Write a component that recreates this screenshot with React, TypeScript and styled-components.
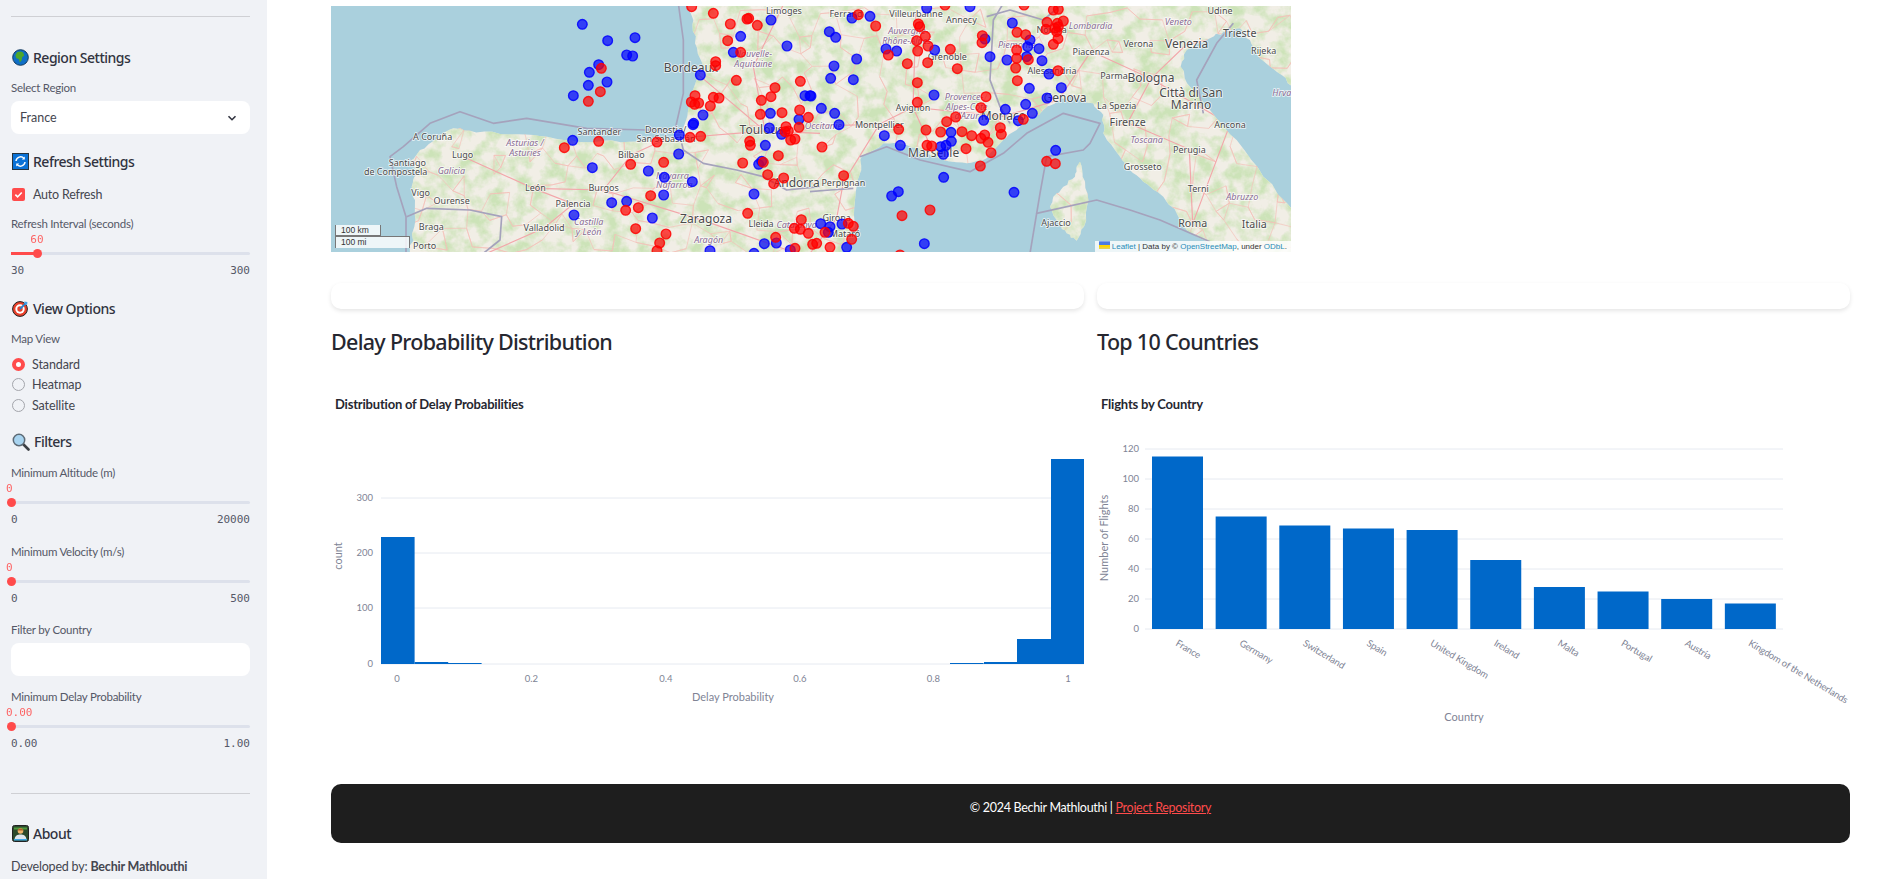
import * as React from 'react'
import styled, { createGlobalStyle } from 'styled-components'

const SANS = `Lato, "Noto Sans", sans-serif`
const HEAD = `"Noto Sans", Lato, sans-serif`
const MONO = `"DejaVu Sans Mono", "Liberation Mono", monospace`
const RED = '#ff4b4b'
const BAR = '#0068c9'
// the map is drawn 3x: the viewBox is 2880 wide, shown at 960px
const EAST = 1470

type Pt = [number, number]

const pairs = (flat: number[], dx = 0): Pt[] => {
    const out: Pt[] = []
    for (let i = 0; i < flat.length; i += 2) out.push([flat[i] + dx, flat[i + 1]])
    return out
}

const line = (flat: number[], dx = 0) => pairs(flat, dx).map(p => p.join(',')).join(' ')

let seed = 17
const rand = () => {
    seed = (seed * 16807) % 2147483647
    return seed / 2147483647
}

// breaks a straight coast segment into a few jagged pieces
const rough = (pts: Pt[], amount = 9) => {
    const out: Pt[] = []
    pts.forEach((p, i) => {
        out.push(p)
        const next = pts[i + 1]
        if (!next) return
        for (let k = 1; k < 4; k++) {
            out.push([
                p[0] + ((next[0] - p[0]) * k) / 4 + (rand() - 0.5) * amount,
                p[1] + ((next[1] - p[1]) * k) / 4 + (rand() - 0.5) * amount,
            ])
        }
    })
    return out.map(p => `${p[0].toFixed(1)},${p[1].toFixed(1)}`).join(' ')
}

const blueMarkers: Pt[] = [
    ...pairs([787,73,863,122,945,113,920,165,938,168,836,194,808,217,861,246,805,256,760,287,1141,225,1149,345,1121,370,1119,374,1078,405,758,421,1076,462,817,503,985,513,1033,532,1117,545,1031,585,920,604,875,608,997,654,762,645,1302,582,1170,752,1333,731,1369,729,1302,760,1411,750,1353,60,1262,109,1401,138,1240,157,1455,287,1470,287,1351,340,1437,358,1348,384,1385,403,1336,436,1325,484,1316,493]),
    ...pairs([350,24,480,20,126,54,180,49,58,95,77,112,228,147,260,153,374,150,140,177,72,198,62,235,130,239,372,285,3,288,34,325,74,340,87,374,223,407,271,436,525,117,540,170,591,180,607,69,660,120,653,140,687,146,650,170,696,182,717,222,658,265,754,263,711,294,647,313,586,328,667,340,521,361,625,362,423,397,424,424,408,436,392,440,400,463,401,532,737,451,612,577,265,575,245,588,343,731,32,671,60,680,96,672,55,697,110,742], EAST),
]

const redMarkers: Pt[] = [
    ...pairs([1115,20,1180,40,1231,72,1281,57,1286,55,1312,76,1223,122,1262,157,1187,185,1187,197,1249,241,1441,244,1365,263,1353,290,1324,301,844,205,841,275,805,304,1125,287,1114,306,1124,313,1136,309,1180,292,1197,294,1171,318,1439,330,1386,338,1321,343,1465,352,1110,412,1142,409,733,443,836,424,1011,426,1289,424,1291,436,1398,380,1395,395,1405,393,1437,382,1412,420,1425,417,1375,467,1268,489,1330,487,932,493,1031,487,1343,524,1391,534,1361,551,992,587,955,623,917,631,947,686,1283,640,1038,702,1019,729,1011,752,1444,659,1423,685,1441,688,1465,700,1367,712,1425,745]),
    ...pairs([405,15,642,15,145,44,197,78,325,72,329,80,346,109,320,122,354,138,323,153,235,165,292,191,353,188,421,148,442,206,517,107,516,128,621,97,647,104,620,150,620,175,655,179,617,204,622,242,744,212,322,248,322,307,528,290,513,323,437,351,410,365,348,390,392,396,456,395,485,407,524,405,513,415,534,427,543,458,468,446,351,436,365,438,574,403,571,383,640,358,511,498,710,484,736,491,266,388,36,441,101,527,360,630,276,647,730,30,745,28,711,67,760,63,742,70,735,85,745,80,708,88,740,95,744,116,730,133,130,679,115,670,45,697,125,718,20,730,8,733,60,742,270,765], EAST),
]

type Label = [string, number, number, 's' | 'm' | 'l' | 'r']

const westLabels: Label[] = [
    ['Limoges',1392,32,'s'],['Bordeaux',1113,205,'l'],['Toulouse',1335,393,'l'],['Nouvelle-',1300,162,'r'],['Aquitaine',1300,191,'r'],
    ['Santander',838,396,'s'],['Donostia/',1037,388,'s'],['San Sebastián',1038,417,'s'],['A Coruña',338,410,'s'],['Lugo',428,464,'s'],
    ['Santiago',262,488,'s'],['de Compostela',227,516,'s'],['Galicia',394,513,'r'],['Asturias /',615,429,'r'],['Asturies',615,457,'r'],
    ['Bilbao',934,464,'s'],['Navarra',1057,527,'r'],['Nafarroa',1063,555,'r'],['Vigo',302,579,'s'],['Ourense',395,601,'s'],['León',646,563,'s'],
    ['Burgos',851,563,'s'],['Palencia',759,612,'s'],['Zaragoza',1158,660,'l'],['Lleida',1323,670,'s'],['Andorra',1430,552,'l'],['Catalunya',1430,675,'r'],
    ['Braga',334,680,'s'],['Valladolid',672,684,'s'],['Castilla',806,666,'r'],['y León',806,694,'r'],['Aragón',1166,720,'r'],['Porto',314,738,'s'],
]

const eastLabels: Label[] = [
    ['Ferrand',108,40,'s'],['Villeurbanne',318,41,'s'],['Annecy',454,60,'s'],['Auvergne-',295,92,'r'],['Rhône-Alpes',290,121,'r'],['Grenoble',412,170,'s'],
    ['Alessandria',726,212,'s'],['Piemonte',620,135,'r'],['Novara',725,90,'s'],['Lombardia',842,76,'r'],['Piacenza',843,154,'s'],['Verona',985,130,'s'],
    ['Venezia',1130,133,'l'],['Veneto',1105,64,'r'],['Udine',1230,33,'s'],['Trieste',1289,100,'m'],['Rijeka',1361,153,'s'],['Hrvatska',1440,277,'r'],
    ['Parma',912,228,'s'],['Bologna',1023,236,'l'],['Città di San',1143,281,'l'],['Marino',1143,318,'l'],['Genova',765,295,'l'],['La Spezia',920,318,'s'],
    ['Firenze',953,368,'m'],['Ancona',1260,373,'s'],['Toscana',1010,420,'r'],['Perugia',1138,448,'s'],['Grosseto',998,501,'s'],['Terni',1165,566,'s'],
    ['Abruzzo',1297,590,'r'],['Roma',1148,671,'m'],['Italia',1333,675,'m'],['Ajaccio',738,667,'s'],['Avignon',309,322,'s'],['Provence-',462,291,'r'],
    ['Alpes-Côte',470,320,'r'],["d'Azur",470,348,'r'],['Monaco',580,349,'l'],['Montpellier',208,373,'s'],['Marseille',371,460,'l'],['Perpignan',100,548,'s'],
    ['Occitanie',40,378,'r'],['Girona',80,654,'s'],['Mataró',105,700,'s'],
]

// Atlantic side, along the top and right edge, then back along the Mediterranean
const mainland = [
    `M${rough(pairs([270,760,283,680,285,600,275,560,290,520,275,480,300,450,345,420,400,385,450,392,540,402,640,405,730,420,830,425,930,425,1010,415,1085,412,1095,370,1110,300,1135,230,1150,200,1125,130,1120,60,1100,10]))}`,
    `L2920,10 L2920,760 L${1245 + EAST},760 L`,
    rough(pairs([1200,735,1130,690,1100,640,1060,590,1000,545,960,510,930,470,880,400,880,345,850,310,790,290,745,300,700,330,640,370,620,390,580,420,530,475,470,490,400,480,340,460,290,435,220,430,155,470,150,520,135,600,135,680,100,735,90,760], EAST)),
    'Z',
].join(' ')

const adriatic = `M${rough(pairs([1450,632,1360,530,1280,420,1200,330,1140,260,1112,200,1130,150,1200,115,1240,95,1290,85,1320,120,1350,175,1400,215,1450,262], EAST))} Z`
const corsica = `M${rough(pairs([810,485,818,530,835,600,822,680,800,722,770,700,745,670,720,620,730,590,760,560,795,530,800,500], EAST), 7)} Z`
const landPath = `${mainland} ${adriatic} ${corsica}`

const borders = [
    line([1085,430,1090,450,1150,490,1250,510,1330,530,1400,570,1500,560]),
    line([0,575,60,570,130,565], EAST),
    line([260,650,320,625,450,630,545,650,540,720,490,760]),
    line([580,10,550,60,540,240,570,320,600,370], EAST),
    line([530,50,600,30,700,60,760,10], EAST),
    line([1075,10,1090,120,1090,280,1065,390,980,390,800,385,620,355,520,370,420,335,330,370,250,440,210,470,230,560,258,650,258,760]),
    line([150,470,230,440,330,480,480,515,580,460,650,400,760,340,870,370,840,430,820,450,710,470,690,580,680,640,860,600,960,630,1050,660,1200,725], EAST),
    line([1180,340,1160,240,1220,130,1270,70], EAST),
    line([680,640,660,760], EAST),
]

// minor road net: a jittered grid, each point joined to its nearest neighbours
const buildRoads = () => {
    const points: Pt[] = []
    for (let x = 40; x < 2920; x += 62) {
        for (let y = 20; y < 760; y += 58) points.push([x + rand() * 50, y + rand() * 46])
    }
    const segs: [Pt, Pt][] = []
    points.forEach(p => {
        const near = points
            .filter(q => q !== p)
            .map(q => ({ q, d: (q[0] - p[0]) ** 2 + (q[1] - p[1]) ** 2 }))
            .sort((a, b) => a.d - b.d)
            .slice(0, 2)
        near.forEach(n => segs.push([p, n.q]))
    })
    return segs
}

const roads = buildRoads()

const mainRoads = [
    line([430,470,640,565,850,570,1160,665,1430,760]),
    line([1113,205,1335,393,1500,400]),
    line([1392,10,1300,200,1335,393]),
    line([640,565,760,612,672,684,500,760]),
    line([850,570,934,464,1038,417,1335,393]),
    line([208,373,309,322,371,460], EAST),
    line([0,378,208,373,100,548,80,654,0,760], EAST),
    line([318,41,309,322,580,349,745,300,843,154,1023,236,1130,133,1289,100], EAST),
    line([1023,236,953,368,1138,448,1148,671,1260,373,1023,236], EAST),
]

const chart1Bars = [
    { x: 50, w: 33.6, top: 167 }, { x: 83.6, w: 33.6, top: 292 }, { x: 117, w: 33.6, top: 293 },
    { x: 619, w: 33.6, top: 293 }, { x: 653, w: 33.6, top: 292 }, { x: 686, w: 34, top: 269 }, { x: 720, w: 33, top: 89 },
]

const countries: [string, number][] = [
    ['France', 115], ['Germany', 75], ['Switzerland', 69], ['Spain', 67], ['United Kingdom', 66],
    ['Ireland', 46], ['Malta', 28], ['Portugal', 25], ['Austria', 20], ['Kingdom of the Netherlands', 17],
]

const GlobeIcon = () => (
    <svg width="17" height="17" viewBox="0 0 17 17">
        <circle cx="8.5" cy="8.5" r="7.8" fill="#0f6fc6" stroke="#123a5e" />
        <path d="M5 3.2c2-1 4.5-1 6 .3l1.3 3-2.2 1.7-.4 3-2 2.400-.8-3.400L4.200 9 3.400 6.200z" fill="#4ea72c" />
    </svg>
)

const RefreshIcon = () => (
    <svg width="17" height="17" viewBox="0 0 17 17">
        <rect x="0.5" y="0.5" width="16" height="16" fill="#0b72d6" stroke="#26343f" />
        <path d="M4 8a4.600 4.600 0 0 1 8-2.600M13 9a4.600 4.600 0 0 1-8 2.600" fill="none" stroke="#fff" strokeWidth="1.5" />
        <path d="M12.800 3.400v3h-3zM4.200 13.600v-3h3z" fill="#fff" />
    </svg>
)

const TargetIcon = () => (
    <svg width="17" height="17" viewBox="0 0 17 17">
        <circle cx="8" cy="9" r="7.4" fill="#e8402a" stroke="#222" />
        <circle cx="8" cy="9" r="4.7" fill="#fff" />
        <circle cx="8" cy="9" r="2.7" fill="#e8402a" />
        <path d="M8 9l6-6" stroke="#2a7fc9" strokeWidth="1.8" />
        <path d="M12.400 1.600l3 .4-.2 2.400-2.400.4z" fill="#3fa0e8" />
    </svg>
)

const LensIcon = () => (
    <svg width="18" height="18" viewBox="0 0 18 18">
        <path d="M10.500 10.500l6 6" stroke="#3c3f44" strokeWidth="2.6" strokeLinecap="round" />
        <circle cx="7" cy="7" r="5.7" fill="#a8d4f0" stroke="#5d6a75" strokeWidth="1.5" />
    </svg>
)

const TechnologistIcon = () => (
    <svg width="17" height="17" viewBox="0 0 17 17">
        <rect x="0.5" y="0.5" width="16" height="16" rx="2" fill="#2c4a2c" stroke="#222" />
        <rect x="2" y="2.5" width="13" height="2" fill="#4f9a3c" />
        <circle cx="8.5" cy="6" r="2.8" fill="#f2b46b" />
        <path d="M5.600 5.400c.3-2.400 5.500-2.400 5.800 0z" fill="#a8622a" />
        <path d="M2.500 14.500c.4-4 3-5 6-5s5.600 1 6 5z" fill="#dfe6ee" />
        <rect x="2" y="14" width="13" height="1.500" fill="#3ea6e6" />
    </svg>
)

const Chevron = () => (
    <svg width="12" height="12" viewBox="0 0 12 12">
        <path d="M2.500 4.200L6 7.700l3.500-3.500" fill="none" stroke="#31333f" strokeWidth="1.600" />
    </svg>
)

const Check = () => (
    <svg width="9" height="9" viewBox="0 0 10 10">
        <path d="M1.500 5.200l2.500 2.500 4.600-5" fill="none" stroke="#fff" strokeWidth="1.800" />
    </svg>
)

const FranceMap = () => (
    <MapFrame>
        <svg width="960" height="246" viewBox="33 18 2880 738">
            <defs>
                <clipPath id="land-clip">
                    <path d={landPath} clipRule="evenodd" />
                </clipPath>
                <filter id="forest" x="0" y="0" width="100%" height="100%" colorInterpolationFilters="sRGB">
                    <feTurbulence type="fractalNoise" baseFrequency="0.022" numOctaves="4" seed="7" />
                    <feColorMatrix values="0 0 0 0 0.80  0 0 0 0 0.89  0 0 0 0 0.72  3 0 0 0 -1.150" />
                </filter>
            </defs>
            <rect x="33" y="18" width="2880" height="738" fill="#aad0dd" />
            <path d={landPath} fillRule="evenodd" fill="#f1eee6" />
            <g clipPath="url(#land-clip)">
                <rect x="33" y="18" width="2880" height="738" filter="url(#forest)" />
                <g stroke="#f5bfb8" strokeWidth="2" fill="none">
                    {roads.map(([a, b], i) => (
                        <line key={i} x1={a[0]} y1={a[1]} x2={b[0]} y2={b[1]} />
                    ))}
                </g>
                <g stroke="#f3a6aa" strokeWidth="3.500" fill="none">
                    {mainRoads.map((r, i) => <polyline key={i} points={r} />)}
                </g>
            </g>
            <g stroke="#a5a2bc" strokeWidth="5" fill="none" strokeLinejoin="round">
                {borders.map((b, i) => <polyline key={i} points={b} />)}
            </g>
            {westLabels.map(([t, x, y, kind]) => (
                <MapLabel key={t} x={x} y={y + 10} $kind={kind}>{t}</MapLabel>
            ))}
            {eastLabels.map(([t, x, y, kind]) => (
                <MapLabel key={t} x={x + EAST} y={y + 10} $kind={kind}>{t}</MapLabel>
            ))}
            {blueMarkers.map(([x, y], i) => <Marker key={i} cx={x} cy={y} $color="#0000ff" />)}
            {redMarkers.map(([x, y], i) => <Marker key={i} cx={x} cy={y} $color="#ff0000" />)}
        </svg>
        <ScaleBar>
            <ScaleBox $width={46}>100 km</ScaleBox>
            <ScaleBox $width={75} $lower>100 mi</ScaleBox>
        </ScaleBar>
        <Attribution>
            <svg width="11" height="8" viewBox="0 0 12 8">
                <rect width="12" height="4" fill="#4c7be1" />
                <rect y="4" width="12" height="3" fill="#ffd500" />
                <rect y="7" width="12" height="1" fill="#e0bc00" />
            </svg>
            {' '}<a>Leaflet</a> | Data by © <a>OpenStreetMap</a>, under <a>ODbL</a>.
        </Attribution>
    </MapFrame>
)

const DelayChart = () => (
    <ChartSvg width="753" height="390" viewBox="0 0 753 390">
        <ChartTitle x="4" y="39">Distribution of Delay Probabilities</ChartTitle>
        {[[300, 128], [200, 183], [100, 238], [0, 294]].map(([v, y]) => (
            <g key={v}>
                <GridLine x1="50" x2="753" y1={y} y2={y} />
                <YTick x="42" y={y + 3}>{v}</YTick>
            </g>
        ))}
        {chart1Bars.map(b => <rect key={b.x} x={b.x} y={b.top} width={b.w} height={294 - b.top} fill={BAR} />)}
        {[['0', 66], ['0.2', 200.5], ['0.4', 335], ['0.6', 469], ['0.8', 602.5], ['1', 737]].map(([t, x]) => (
            <XTick key={t} x={x} y="312">{t}</XTick>
        ))}
        <AxisTitle x="402" y="331">Delay Probability</AxisTitle>
        <AxisTitle transform="translate(11,186) rotate(-90)">count</AxisTitle>
    </ChartSvg>
)

const CountryChart = () => (
    <ChartSvg width="753" height="390" viewBox="0 0 753 390">
        <ChartTitle x="4" y="39">Flights by Country</ChartTitle>
        {[120, 100, 80, 60, 40, 20, 0].map(v => {
            const y = 259 - v * 1.5
            return (
                <g key={v}>
                    <GridLine x1="48" x2="686" y1={y} y2={y} />
                    <YTick x="42" y={y + 3}>{v}</YTick>
                </g>
            )
        })}
        {countries.map(([name, count], i) => {
            const x = 55 + i * 63.65
            return (
                <g key={name}>
                    <rect x={x} y={259 - count * 1.5} width="51" height={count * 1.5} fill={BAR} />
                    <SlantTick transform={`translate(${x + 23},275) rotate(31)`}>{name}</SlantTick>
                </g>
            )
        })}
        <AxisTitle x="367" y="351">Country</AxisTitle>
        <AxisTitle transform="translate(11,168) rotate(-90)">Number of Flights</AxisTitle>
    </ChartSvg>
)

interface SliderProps {
    value: string
    min: string
    max: string
    percent: number
}

const Slider = ({ value, min, max, percent }: SliderProps) => (
    <SliderWrap>
        <SliderValue $percent={percent}>{value}</SliderValue>
        <Track>
            <TrackFill $percent={percent} />
            <Thumb $percent={percent} />
        </Track>
        <SliderEnds><span>{min}</span><span>{max}</span></SliderEnds>
    </SliderWrap>
)

export default function App() {
    return (
        <Page>
            <GlobalStyle />
            <Sidebar>
                <Divider />
                <SideHeading $top={28}><GlobeIcon />Region Settings</SideHeading>
                <FieldLabel $top={11}>Select Region</FieldLabel>
                <Select>France<Chevron /></Select>

                <SideHeading $top={15}><RefreshIcon />Refresh Settings</SideHeading>
                <CheckRow><CheckBox><Check /></CheckBox>Auto Refresh</CheckRow>
                <FieldLabel $top={12}>Refresh Interval (seconds)</FieldLabel>
                <Slider value="60" min="30" max="300" percent={11} />

                <SideHeading $top={17}><TargetIcon />View Options</SideHeading>
                <FieldLabel $top={11}>Map View</FieldLabel>
                <RadioGroup>
                    <RadioRow><Radio $checked />Standard</RadioRow>
                    <RadioRow><Radio />Heatmap</RadioRow>
                    <RadioRow><Radio />Satellite</RadioRow>
                </RadioGroup>

                <SideHeading $top={14}><LensIcon />Filters</SideHeading>
                <FieldLabel $top={11}>Minimum Altitude (m)</FieldLabel>
                <Slider value="0" min="0" max="20000" percent={0} />
                <FieldLabel $top={16}>Minimum Velocity (m/s)</FieldLabel>
                <Slider value="0" min="0" max="500" percent={0} />
                <FieldLabel $top={15}>Filter by Country</FieldLabel>
                <TextBox />
                <FieldLabel $top={13}>Minimum Delay Probability</FieldLabel>
                <Slider value="0.00" min="0.00" max="1.00" percent={0} />

                <Divider $top={41} />
                <SideHeading $top={28}><TechnologistIcon />About</SideHeading>
                <Credit>Developed by: <b>Bechir Mathlouthi</b></Credit>
            </Sidebar>
            <Main>
                <FranceMap />
                <Columns $top={31}>
                    <Card />
                    <Card />
                </Columns>
                <Columns $top={14}>
                    <Heading>Delay Probability Distribution</Heading>
                    <Heading>Top 10 Countries</Heading>
                </Columns>
                <Columns $top={11}>
                    <DelayChart />
                    <CountryChart />
                </Columns>
                <Footer>
                    © 2024 Bechir Mathlouthi | <FooterLink>Project Repository</FooterLink>
                </Footer>
            </Main>
        </Page>
    )
}

const GlobalStyle = createGlobalStyle`
    html, body {
        margin: 0;
        padding: 0;
        background: #fff;
        overflow: hidden;
    }
    * {
        box-sizing: border-box;
    }
`

const Page = styled.div`
    display: flex;
    width: 1880px;
    height: 879px;
    overflow: hidden;
    font-family: ${SANS};
    color: #31333f;
`

const Sidebar = styled.aside`
    flex: 0 0 267px;
    height: 879px;
    overflow: hidden;
    padding: 16px 17px 0 11px;
    background: #f0f2f6;
`

const Divider = styled.hr<{ $top?: number }>`
    height: 1px;
    margin: ${p => p.$top ?? 0}px 0 0;
    border: 0;
    background: #cfd0d4;
`

const SideHeading = styled.h3<{ $top: number }>`
    display: flex;
    align-items: center;
    gap: 4px;
    height: 24px;
    margin: ${p => p.$top}px 0 0;
    font-family: ${HEAD};
    font-size: 14px;
    font-weight: 500;
    letter-spacing: -0.5px;
    color: #31333f;

    svg {
        flex: none;
        margin-left: 1px;
    }
`

const FieldLabel = styled.label<{ $top: number }>`
    display: block;
    height: 16px;
    margin-top: ${p => p.$top}px;
    font-size: 11.5px;
    letter-spacing: -0.25px;
    line-height: 16px;
    color: #555867;
`

const Select = styled.div`
    display: flex;
    align-items: center;
    justify-content: space-between;
    height: 33px;
    margin-top: 5px;
    padding: 0 12px 0 9px;
    border-radius: 8px;
    background: #fff;
    font-size: 12.5px;
    color: #44464f;
`

const TextBox = styled.div`
    height: 33px;
    margin-top: 5px;
    border-radius: 8px;
    background: #fff;
`

const CheckRow = styled.div`
    display: flex;
    align-items: center;
    gap: 8px;
    height: 20px;
    margin-top: 11px;
    padding-left: 1px;
    font-size: 12.5px;
    letter-spacing: -0.2px;
    color: #44464f;
`

const CheckBox = styled.span`
    display: flex;
    align-items: center;
    justify-content: center;
    width: 13px;
    height: 13px;
    border-radius: 2px;
    background: ${RED};
`

const RadioGroup = styled.div`
    margin-top: 7px;
`

const RadioRow = styled.div`
    display: flex;
    align-items: center;
    gap: 7px;
    height: 20.5px;
    padding-left: 1px;
    font-size: 12.5px;
    letter-spacing: -0.1px;
    color: #44464f;
`

const Radio = styled.span<{ $checked?: boolean }>`
    width: 13px;
    height: 13px;
    border-radius: 50%;
    border: ${p => (p.$checked ? `4px solid ${RED}` : '1px solid #a3a5ab')};
    background: ${p => (p.$checked ? '#fff' : '#f0f2f6')};
`

const SliderWrap = styled.div`
    position: relative;
    height: 47px;
    font-family: ${MONO};
    font-size: 11px;
`

const SliderValue = styled.span<{ $percent: number }>`
    position: absolute;
    top: 1px;
    left: ${p => (p.$percent ? `calc(${p.$percent}% - 7px)` : '-5px')};
    line-height: 14px;
    color: ${RED};
    opacity: 0.85;
`

const Track = styled.div`
    position: absolute;
    top: 20px;
    left: 0;
    right: 0;
    height: 3px;
    border-radius: 2px;
    background: #dde1eb;
`

const TrackFill = styled.div<{ $percent: number }>`
    width: ${p => p.$percent}%;
    height: 100%;
    background: ${RED};
`

const Thumb = styled.div<{ $percent: number }>`
    position: absolute;
    top: -3px;
    left: calc(${p => p.$percent}% - 4.5px);
    width: 9px;
    height: 9px;
    border-radius: 50%;
    background: ${RED};
`

const SliderEnds = styled.div`
    position: absolute;
    left: 0;
    right: 0;
    top: 32px;
    display: flex;
    justify-content: space-between;
    line-height: 14px;
    color: #555867;
`

const Credit = styled.p`
    margin: 11px 0 0;
    font-size: 12.5px;
    letter-spacing: -0.2px;
    line-height: 20px;
    color: #44464f;

    b {
        font-weight: 700;
    }
`

const Main = styled.main`
    flex: 1;
    min-width: 0;
    padding: 6px 30px 0 64px;
`

const MapFrame = styled.div`
    position: relative;
    width: 960px;
    height: 246px;
    overflow: hidden;

    > svg {
        display: block;
    }
`

const MapLabel = styled.text<{ $kind: 's' | 'm' | 'l' | 'r' }>`
    font-family: "Noto Sans", sans-serif;
    font-size: ${p => ({ s: 27, m: 32, l: 36, r: 27 }[p.$kind])}px;
    font-style: ${p => (p.$kind === 'r' ? 'italic' : 'normal')};
    fill: ${p => (p.$kind === 'r' ? '#8a6d94' : '#4b4b4b')};
    stroke: rgba(255, 255, 255, 0.75);
    stroke-width: 5px;
    paint-order: stroke;
    text-anchor: middle;
`

const Marker = styled.circle.attrs({ r: 14.5 })<{ $color: string }>`
    fill: ${p => p.$color};
    fill-opacity: 0.7;
    stroke: ${p => p.$color};
    stroke-opacity: 0.85;
    stroke-width: 4px;
`

const ScaleBar = styled.div`
    position: absolute;
    left: 4px;
    bottom: 4px;
`

const ScaleBox = styled.div<{ $width: number; $lower?: boolean }>`
    width: ${p => p.$width}px;
    height: ${p => (p.$lower ? 12 : 11)}px;
    padding-left: 5px;
    border: 1px solid #777;
    border-top-width: ${p => (p.$lower ? 1 : 0)}px;
    border-bottom-width: ${p => (p.$lower ? 0 : 1)}px;
    background: rgba(255, 255, 255, 0.8);
    font-family: "Liberation Sans", sans-serif;
    font-size: 8.5px;
    line-height: 10px;
    color: #333;
`

const Attribution = styled.div`
    position: absolute;
    right: 0;
    bottom: 0;
    height: 11px;
    padding: 0 4px;
    background: rgba(255, 255, 255, 0.8);
    font-family: "Liberation Sans", sans-serif;
    font-size: 8px;
    line-height: 11px;
    white-space: nowrap;
    color: #333;

    a {
        color: #2a8cb8;
    }
`

const Columns = styled.div<{ $top: number }>`
    display: grid;
    grid-template-columns: 753px 753px;
    gap: 13px;
    margin-top: ${p => p.$top}px;
`

const Card = styled.div`
    height: 26px;
    border-radius: 10px;
    background: #fff;
    box-shadow: 0 2px 4px rgba(0, 0, 0, 0.1);
`

const Heading = styled.h2`
    height: 36px;
    margin: 0;
    font-family: ${HEAD};
    font-size: 21.5px;
    font-weight: 500;
    letter-spacing: -0.7px;
    line-height: 37px;
    color: #262730;
`

const ChartSvg = styled.svg`
    display: block;
    overflow: visible;
    font-family: ${SANS};
`

const ChartTitle = styled.text`
    font-size: 13px;
    font-weight: 700;
    letter-spacing: -0.2px;
    fill: #262730;
`

const GridLine = styled.line`
    stroke: #e6eaf1;
    stroke-width: 1px;
`

const YTick = styled.text`
    font-size: 9.5px;
    fill: #808495;
    text-anchor: end;
`

const XTick = styled.text`
    font-size: 9.5px;
    fill: #808495;
    text-anchor: middle;
`

const SlantTick = styled.text`
    font-size: 9.5px;
    letter-spacing: -0.15px;
    fill: #808495;
`

const AxisTitle = styled.text`
    font-size: 11px;
    fill: #808495;
    text-anchor: middle;
`

const Footer = styled.footer`
    height: 59px;
    margin-top: 24px;
    padding-top: 15px;
    border-radius: 10px;
    background: #1e1e1e;
    font-size: 12.5px;
    letter-spacing: -0.3px;
    line-height: 18px;
    text-align: center;
    color: #fff;
`

const FooterLink = styled.a`
    color: ${RED};
    text-decoration: underline;
`
